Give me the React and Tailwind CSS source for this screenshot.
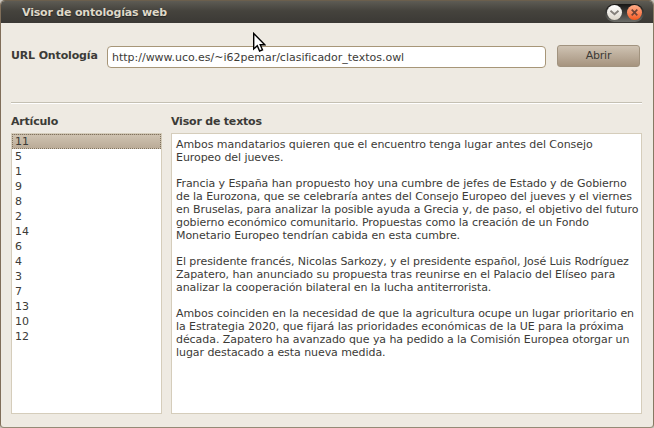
const articles = [11, 5, 1, 9, 8, 2, 14, 6, 4, 3, 7, 13, 10, 12];

const text = `Ambos mandatarios quieren que el encuentro tenga lugar antes del Consejo
Europeo del jueves.

Francia y España han propuesto hoy una cumbre de jefes de Estado y de Gobierno
de la Eurozona, que se celebraría antes del Consejo Europeo del jueves y el viernes
en Bruselas, para analizar la posible ayuda a Grecia y, de paso, el objetivo del futuro
gobierno económico comunitario. Propuestas como la creación de un Fondo
Monetario Europeo tendrían cabida en esta cumbre.

El presidente francés, Nicolas Sarkozy, y el presidente español, José Luis Rodríguez
Zapatero, han anunciado su propuesta tras reunirse en el Palacio del Elíseo para
analizar la cooperación bilateral en la lucha antiterrorista.

Ambos coinciden en la necesidad de que la agricultura ocupe un lugar prioritario en
la Estrategia 2020, que fijará las prioridades económicas de la UE para la próxima
década. Zapatero ha avanzado que ya ha pedido a la Comisión Europea otorgar un
lugar destacado a esta nueva medida.`;

function TitleBar() {
  return (
    <header className="flex h-[22px] shrink-0 items-center justify-between bg-linear-to-b from-[#5d5b54] via-[#45433d] via-45% to-[#3b3935] pl-[21px] pr-[9px]">
      <h1 className="text-[11px] leading-[13px] font-bold tracking-[-0.18px] text-[#dfd8c8] [text-shadow:0_1px_1px_#222]">Visor de ontologías web</h1>
      <div className="mt-px flex h-[18px] w-[39px] items-center justify-between rounded-full bg-linear-to-b from-[#171615] to-[#6c6d68] px-[2px]">
        <button className="flex size-[15px] items-center justify-center rounded-full bg-linear-to-b from-white to-[#ddd7cb]">
          <svg width="11" height="9" viewBox="0 0 11 9" fill="none" stroke="#85817b" strokeWidth="1.9">
            <path d="M1.5 2.7 5.5 6.2 9.5 2.7" />
          </svg>
        </button>
        <button className="flex size-[15px] items-center justify-center rounded-full bg-linear-to-b from-[#ffad88] to-[#f4581a]">
          <svg width="9" height="9" viewBox="0 0 9 9" fill="none" stroke="#704336" strokeWidth="1.7">
            <path d="M1.7 1.7 7.3 7.3M7.3 1.7 1.7 7.3" />
          </svg>
        </button>
      </div>
    </header>
  );
}

function Pointer() {
  return (
    <svg className="absolute left-[253px] top-[32px]" width="13" height="20" viewBox="0 0 13 20">
      <path d="M.7 1.5V17L4.3 13.7 6.6 19 9.5 17.8 7.2 12.7H11.8Z" fill="#fff" stroke="#000" strokeWidth="1.4" />
    </svg>
  );
}

export default function App() {
  return (
    <div className="relative h-[428px] w-[654px] overflow-hidden bg-[#c9c5bd] font-['DejaVu_Sans',sans-serif] text-[11px] leading-[13px] text-[#3c3b37]">
      <div className="flex h-full flex-col overflow-hidden rounded-t-[5px] rounded-b-[4px] border border-t-[#6b5f4d] border-r-[#857963] border-b-[#958a76] border-l-[#806e59] bg-[#eeeae2]">
        <TitleBar />
        <main className="flex flex-1 flex-col px-[10px] pb-[13px]">
          <div className="flex h-[79px] items-start pt-[22px]">
            <label htmlFor="url" className="mt-[4px] w-[96px] font-bold tracking-[-0.15px] whitespace-nowrap">URL Ontología</label>
            <input
              id="url"
              className="mt-px h-[22px] w-[439px] rounded-[4px] border border-[#a79678] bg-white px-[4px] tracking-[-0.01px] outline-none"
              defaultValue="http://www.uco.es/~i62pemar/clasificador_textos.owl"
            />
            <button className="ml-[11px] h-[22px] w-[83px] rounded-[3px] border border-[#a1937f] bg-linear-to-b from-[#cfc3b3] to-[#a6947f] pb-px tracking-[-0.25px]">Abrir</button>
          </div>
          <div className="h-[2px] w-[631px] border-b border-white bg-[#c4c0b3]" />
          <div className="mt-[11px] flex flex-1 gap-[9px]">
            <section className="flex w-[151px] flex-col">
              <h2 className="h-[18px] font-bold tracking-[-0.2px]">Artículo</h2>
              <ul className="flex-1 border border-[#d5cdbb] bg-white">
                {articles.map((n, i) => (
                  <li
                    key={n}
                    className={
                      i === 0
                        ? "h-[15px] border border-dotted border-[#81745f] bg-linear-to-b from-[#cfc3b1] to-[#baab97] pl-[2px]"
                        : "h-[15px] pt-px pl-[3px]"
                    }
                  >
                    {n}
                  </li>
                ))}
              </ul>
            </section>
            <section className="flex w-[471px] flex-col">
              <h2 className="h-[18px] font-bold tracking-[-0.2px]">Visor de textos</h2>
              <div className="flex-1 border border-[#d5cdbb] bg-white pt-[4px] pl-[4px] tracking-[-0.063px] whitespace-pre [font-variant-ligatures:common-ligatures]">{text}</div>
            </section>
          </div>
        </main>
      </div>
      <Pointer />
    </div>
  );
}
